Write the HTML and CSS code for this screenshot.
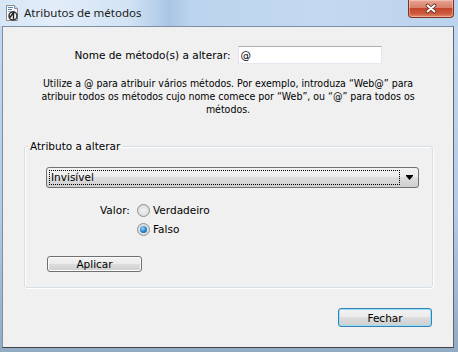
FILE: index.html
```html
<!DOCTYPE html>
<html lang="pt">
<head>
    <meta charset="UTF-8">
    <title>Atributos de métodos</title>
    <link rel="stylesheet" href="styles.css">
</head>
<body>
    <div class="window">
        <div class="titlebar">
            <svg class="app-icon" width="16" height="16" viewBox="0 0 16 16">
                <path d="M2.5 0.5 H10.5 L13.5 3.5 V15.5 H2.5 Z" fill="#fbfbfb" stroke="#8c8c8c"/>
                <path d="M10.5 0.5 V3.5 H13.5" fill="#dcdcdc" stroke="#8c8c8c"/>
                <rect x="4" y="2" width="5" height="1" fill="#4a86c8"/>
                <rect x="4" y="4" width="4" height="1" fill="#4a86c8"/>
                <rect x="4" y="6" width="5" height="1" fill="#8fb3dc"/>
                <circle cx="9" cy="11" r="4" fill="none" stroke="#3b3b3b" stroke-width="1.6"/>
                <path d="M6 12.5 L9.5 7.5 V14.5" fill="none" stroke="#1f1f1f" stroke-width="1.4"/>
            </svg>
            <span class="title">Atributos de métodos</span>
            <div class="close-btn">
                <svg width="14" height="11" viewBox="0 0 14 11">
                    <path d="M3.5 2.5 L10.5 8.5 M10.5 2.5 L3.5 8.5" stroke="#5a2a22" stroke-width="3.6" stroke-linecap="round"/>
                    <path d="M3.5 2.5 L10.5 8.5 M10.5 2.5 L3.5 8.5" stroke="#ffffff" stroke-width="2" stroke-linecap="round"/>
                </svg>
            </div>
        </div>

        <div class="client">
            <div class="name-row">
                <label class="name-label" for="name">Nome de método(s) a alterar:</label>
                <input class="name-input" id="name" type="text" value="@">
            </div>

            <p class="hint">
                Utilize a @ para atribuir vários métodos. Por exemplo, introduza “Web@” para<br>
                atribuir todos os métodos cujo nome comece por “Web”, ou “@” para todos os<br>
                métodos.
            </p>

            <fieldset class="group">
                <legend class="group-title">Atributo a alterar</legend>
                <div class="group-body">
                    <div class="combo">
                        <span class="combo-text">Invisível</span>
                        <span class="combo-arrow">
                            <svg width="7" height="5" viewBox="0 0 7 5">
                                <rect x="0" y="0" width="7" height="1" fill="#000"/>
                                <path d="M0 1 H7 L3.5 5 Z" fill="#000"/>
                            </svg>
                        </span>
                    </div>

                    <div class="value-row">
                        <span class="value-label">Valor:</span>
                        <div class="options">
                            <label class="option"><span class="radio"></span>Verdadeiro</label>
                            <label class="option"><span class="radio checked"></span>Falso</label>
                        </div>
                    </div>

                    <button class="btn btn-apply">Aplicar</button>
                </div>
            </fieldset>

            <div class="footer">
                <button class="btn btn-default">Fechar</button>
            </div>
        </div>
    </div>
</body>
</html>
```

FILE: styles.css
```css
* {
    margin: 0;
    padding: 0;
    box-sizing: border-box;
}

body {
    font-family: "DejaVu Sans", sans-serif;
    font-size: 10.5px;
    color: #000;
    background: #fff;
}

.window {
    width: 458px;
    height: 352px;
    display: flex;
    flex-direction: column;
    background: linear-gradient(180deg, #c4daf1 0%, #b3cbe5 60%, #93aac3 100%);
}

/* title bar */
.titlebar {
    height: 26px;
    display: flex;
    align-items: flex-start;
    padding-right: 4px;
    background: linear-gradient(90deg, #d6e6f6 0%, #e2edf9 12%, #d2e3f5 28%, #b8d0ea 34%, #a9c5e4 37%, #bdd4ee 42%, #c3d9f1 70%, #bcd3ec 100%);
}

.app-icon {
    margin: 5px 0 0 4px;
    flex: none;
}

.title {
    margin: 5px 0 0 4px;
    font-family: "Noto Sans", sans-serif;
    font-size: 11.5px;
    line-height: 16px;
    color: #1b1b1b;
}

.close-btn {
    margin-left: auto;
    width: 46px;
    height: 18px;
    display: flex;
    align-items: center;
    justify-content: center;
    border: 1px solid #7d3326;
    border-top: none;
    border-radius: 0 0 4px 4px;
    background: linear-gradient(180deg, #e8a493 0%, #d9806a 45%, #c5452c 50%, #cc5a3e 80%, #e08a6a 100%);
    box-shadow: inset 0 0 0 1px rgba(255, 220, 210, 0.45);
}

/* client area */
.client {
    flex: 1;
    margin: 0 4px 4px 2px;
    background: #f0f0f0;
    border: 1px solid #7c8fa5;
    border-bottom-color: #3d4248;
    border-right-color: #5d6772;
    display: flex;
    flex-direction: column;
}

.name-row {
    display: flex;
    justify-content: center;
    align-items: center;
    gap: 7px;
    margin-top: 19px;
}

.name-input {
    width: 144px;
    height: 18px;
    padding: 0 2px;
    font-family: inherit;
    font-size: inherit;
    color: #000;
    background: #fff;
    border: 1px solid #e3e9ef;
    border-top-color: #abadb3;
    border-left-color: #e2e3ea;
    outline: none;
}

.hint {
    margin-top: 13px;
    font-family: "DejaVu Sans Condensed", "DejaVu Sans", sans-serif;
    font-stretch: condensed;
    text-align: center;
    line-height: 13px;
    white-space: nowrap;
}

/* group box */
.group {
    margin: 24px 20px 0 21px;
    border: 1px solid #d5dfe5;
    border-radius: 3px;
    box-shadow: 1px 1px 0 #fff, inset 1px 1px 0 #fff;
}

.group-title {
    margin-left: 3px;
    padding: 0 2px;
    line-height: 13px;
}

.group-body {
    padding: 14px 13px 15px 21px;
}

.combo {
    height: 21px;
    display: flex;
    padding: 2px 0 2px 2px;
    border: 1px solid #707070;
    border-radius: 3px;
    background: linear-gradient(180deg, #f2f2f2 0%, #ebebeb 50%, #dddddd 50%, #cfcfcf 100%);
}

.combo-text {
    flex: 1;
    padding-left: 1px;
    line-height: 13px;
    border: 1px dotted #000;
}

.combo-arrow {
    width: 18px;
    display: flex;
    align-items: center;
    justify-content: center;
}

.value-row {
    display: flex;
    margin: 15px 0 0 54px;
}

.value-label {
    width: 37px;
    line-height: 15px;
}

.options {
    display: flex;
    flex-direction: column;
    gap: 4px;
}

.option {
    display: flex;
    align-items: center;
    gap: 3px;
    line-height: 15px;
}

.radio {
    width: 13px;
    height: 13px;
    border-radius: 50%;
    border: 1px solid #8e8f8f;
    background: radial-gradient(circle at 50% 50%, #f2f2f2 0%, #e0e0e0 60%, #cfcfcf 100%);
    display: flex;
    align-items: center;
    justify-content: center;
}

.radio.checked::after {
    content: "";
    width: 7px;
    height: 7px;
    border-radius: 50%;
    background: radial-gradient(circle at 40% 35%, #9ad8fa 0%, #2a86cf 50%, #0d4c8a 100%);
}

/* buttons */
.btn {
    display: block;
    font-family: inherit;
    font-size: inherit;
    color: #000;
    border: 1px solid #707070;
    border-radius: 3px;
    background: linear-gradient(180deg, #f2f2f2 0%, #ebebeb 50%, #dddddd 50%, #cfcfcf 100%);
    box-shadow: inset 0 0 0 1px #fcfcfc;
}

.btn-apply {
    width: 95px;
    height: 16px;
    margin: 19px 0 0 1px;
    line-height: 13px;
}

.footer {
    display: flex;
    justify-content: flex-end;
    padding: 20px 21px 0 0;
}

.btn-default {
    width: 94px;
    height: 19px;
    border-color: #3c7fb1;
    box-shadow: inset 0 0 0 1px #8fe2fb;
}
```
